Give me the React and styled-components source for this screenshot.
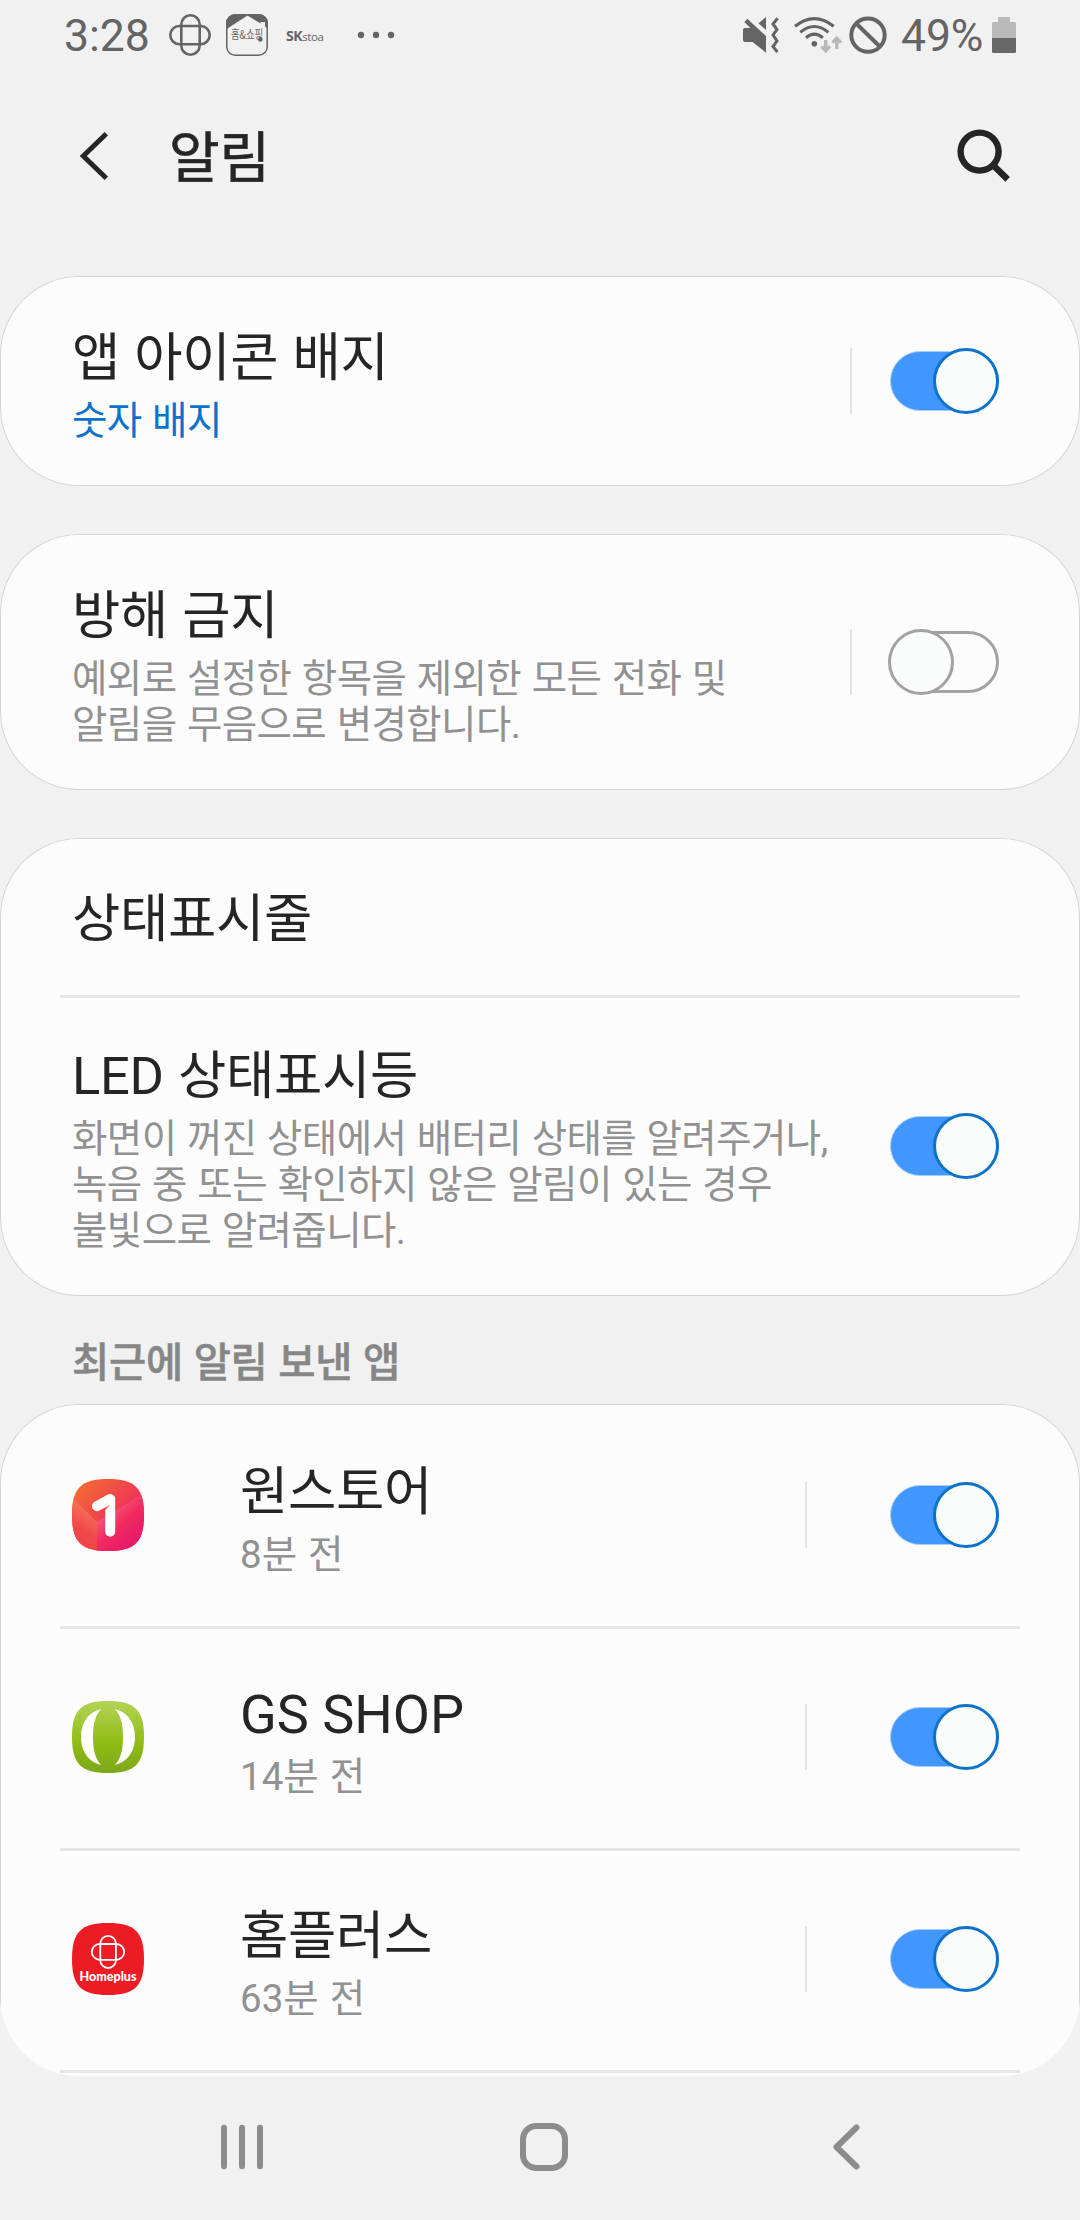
import React from 'react'
import styled, { createGlobalStyle, css } from 'styled-components';

const GlobalStyle = createGlobalStyle`
  * {
    box-sizing: border-box;
  }
  body {
    margin: 0;
    background: #f1f1f1;
    font-family: Roboto, "Noto Sans CJK KR", sans-serif;
    color: #252525;
  }
`;

const apps = [
  { id: 1, name: '원스토어', time: '8분 전', icon: <OneStoreIcon /> },
  { id: 2, name: 'GS SHOP', time: '14분 전', icon: <GsShopIcon />, latin: true },
  { id: 3, name: '홈플러스', time: '63분 전', icon: <HomeplusIcon /> },
];

const App = () => {
  return (
    <Screen>
      <GlobalStyle />
      <StatusBar />
      <Header>
        <BackIcon />
        <PageTitle>알림</PageTitle>
        <SearchIcon />
      </Header>

      <Card>
        <Row $height={210}>
          <Texts>
            <Title>앱 아이콘 배지</Title>
            <Summary $active>숫자 배지</Summary>
          </Texts>
          <Separator />
          <Toggle on />
        </Row>
      </Card>

      <Card>
        <Row $height={256}>
          <Texts>
            <Title>방해 금지</Title>
            <Summary>예외로 설정한 항목을 제외한 모든 전화 및<br />알림을 무음으로 변경합니다.</Summary>
          </Texts>
          <Separator />
          <Toggle />
        </Row>
      </Card>

      <Card>
        <Row $height={157} $top={6}>
          <Texts>
            <Title>상태표시줄</Title>
          </Texts>
        </Row>
        <Row $height={301} $line>
          <Texts>
            <Title>LED 상태표시등</Title>
            <Summary>
              화면이 꺼진 상태에서 배터리 상태를 알려주거나,<br />
              녹음 중 또는 확인하지 않은 알림이 있는 경우<br />
              불빛으로 알려줍니다.
            </Summary>
          </Texts>
          <Toggle on />
        </Row>
      </Card>

      <SectionTitle>최근에 알림 보낸 앱</SectionTitle>
      <ListClip>
        <AppList>
          {apps.map((app, i) => (
            <Row key={app.id} $height={222} $line={i > 0}>
              <IconCell>{app.icon}</IconCell>
              <Texts>
                <Title $latin={app.latin}>{app.name}</Title>
                <Summary $time>{app.time}</Summary>
              </Texts>
              <Separator $wide />
              <Toggle on />
            </Row>
          ))}
          <Row $height={222} $line />
        </AppList>
      </ListClip>

      <NavBar>
        <svg width="48" height="48" viewBox="218 2123 48 48" fill="none" stroke="#8c8c8c" strokeWidth="6" strokeLinecap="round">
          <path d="M224 2127.7V2166.3M242 2127.7V2166.3M260 2127.7V2166.3" />
        </svg>
        <svg width="48" height="48" viewBox="0 0 48 48" fill="none" stroke="#8c8c8c" strokeWidth="6">
          <rect x="3" y="3" width="42" height="42" rx="13" />
        </svg>
        <svg width="48" height="48" viewBox="822 2123 48 48" fill="none" stroke="#8c8c8c" strokeWidth="6" strokeLinecap="round" strokeLinejoin="round">
          <path d="M856.5 2127.5L836.5 2147L856.5 2166.5" />
        </svg>
      </NavBar>
    </Screen>
  );
};

const Toggle = ({ on }) => (
  <Switch>
    <Track $on={on} />
    <Knob $on={on} />
  </Switch>
);

const StatusBar = () => (
  <Bar>
    <Clock>3:28</Clock>
    <svg width="42" height="42" viewBox="169 14 42 42" fill="none" stroke="#646464" strokeWidth="2.6">
      <rect x="181.3" y="15.3" width="18.4" height="39.4" rx="9.2" />
      <rect x="170.3" y="26" width="39.4" height="18.2" rx="9.1" />
    </svg>
    <HomeShopping width="42" height="42" viewBox="0 0 42 42">
      <path d="M0 15V9A9 9 0 0 1 9 0H33A9 9 0 0 1 42 9V15L39 12.5V8H34.5V9.5L21.5 1.5L1.5 14.5Z" fill="#646464" />
      <rect x="0.8" y="0.8" width="40.4" height="40.4" rx="8.5" fill="none" stroke="#646464" strokeWidth="1.5" />
      <text x="5" y="25" textLength="32" lengthAdjust="spacingAndGlyphs">홈&amp;쇼핑</text>
      <circle cx="34.3" cy="25.4" r="2.3" fill="#646464" />
    </HomeShopping>
    <StoaText><b>SK</b>stoa</StoaText>
    <svg width="38" height="8" viewBox="357 31 38 8" fill="#646464">
      <circle cx="361" cy="35" r="3.2" />
      <circle cx="376" cy="35" r="3.2" />
      <circle cx="391" cy="35" r="3.2" />
    </svg>
    <StatusRight>
      <svg width="38" height="40" viewBox="743 15 38 40" fill="#646464">
        <path d="M743 30Q743 28 745 28H750.5L744.3 22L747.3 18.8L766 36V52.7L752.5 42H745Q743 42 743 40Z" />
        <path d="M766 17V30L758.5 23.3Z" />
        <path d="M777.6 18.2L773 24L777 29.5L773 35L777 41L773 46.5L777.3 52" fill="none" stroke="#646464" strokeWidth="3" />
      </svg>
      <svg width="50" height="40" viewBox="793 15 50 40" fill="none" stroke="#646464" strokeWidth="3.1">
        <path d="M795 26.2Q814.3 11 833.7 26.2M800.3 32.4Q814.3 20.6 828.3 32.4M806 37.8Q814.3 30.4 822.8 37.8" />
        <circle cx="814.3" cy="43.7" r="2.8" fill="#646464" stroke="none" />
        <path d="M825.7 40V51M821.5 46.3L825.7 50.8L830 46.3M836.8 49V38M832.5 42.7L836.8 38.2L841 42.7" stroke="#b8b8b8" strokeWidth="3.4" />
      </svg>
      <svg width="38" height="38" viewBox="849 15.7 38 38" fill="none" stroke="#646464" strokeWidth="4">
        <circle cx="868" cy="34.8" r="16.7" />
        <path d="M856.5 23.5L879.5 46" />
      </svg>
      <Percent>49%</Percent>
      <svg width="24" height="36" viewBox="0 0 24 36">
        <path d="M6 1Q6 0 7 0H17Q18 0 18 1V5H22.5Q24 5 24 6.5V21H0V6.5Q0 5 1.5 5H6Z" fill="#bababa" />
        <path d="M0 21H24V34.5Q24 36 22.5 36H1.5Q0 36 0 34.5Z" fill="#676767" />
      </svg>
    </StatusRight>
  </Bar>
);

const BackIcon = () => (
  <svg width="30" height="50" viewBox="79 131 30 50" fill="none" stroke="#252525" strokeWidth="5">
    <path d="M106.3 133.8L83.3 156L106.3 178.2" />
  </svg>
);

const SearchIcon = () => (
  <svg width="54" height="54" viewBox="957 129 54 54" fill="none" stroke="#252525" strokeWidth="6.4">
    <circle cx="979.6" cy="151.6" r="19" />
    <path d="M993.5 165.5L1007.6 179.4" />
  </svg>
);

const squircle = 'M36 0C63 0 72 9 72 36S63 72 36 72 0 63 0 36 9 0 36 0Z';

function OneStoreIcon() {
  return (
    <svg width="72" height="72" viewBox="0 0 72 72">
      <defs>
        <linearGradient id="one-bg" x1="0" y1="0" x2="1" y2="1">
          <stop offset="0.1" stopColor="#f36a32" />
          <stop offset="0.5" stopColor="#f03e50" />
          <stop offset="0.9" stopColor="#e8156f" />
        </linearGradient>
        <linearGradient id="one-right" gradientUnits="userSpaceOnUse" x1="30" y1="30" x2="62" y2="66">
          <stop offset="0" stopColor="#f6667e" />
          <stop offset="0.5" stopColor="#f02a5e" />
          <stop offset="1" stopColor="#e8186c" />
        </linearGradient>
        <linearGradient id="one-left" gradientUnits="userSpaceOnUse" x1="14" y1="30" x2="3" y2="48">
          <stop offset="0" stopColor="#f46e58" />
          <stop offset="1" stopColor="#f14648" />
        </linearGradient>
        <clipPath id="one-clip"><path d={squircle} /></clipPath>
      </defs>
      <g clipPath="url(#one-clip)">
        <rect width="72" height="72" fill="url(#one-bg)" />
        <path d="M0 18L25 43V72H0Z" fill="url(#one-left)" />
        <path d="M25 43L72 14V72H25Z" fill="url(#one-right)" />
      </g>
      <path d="M25 27.2L38.2 20V52.8" fill="none" stroke="#fff" strokeWidth="10" strokeLinecap="round" strokeLinejoin="round" />
      <path d="M33 28.7L38 25.8L33.2 31.2Z" fill="#f04a50" />
    </svg>
  );
}

function GsShopIcon() {
  return (
    <svg width="72" height="72" viewBox="0 0 72 72">
      <defs>
        <linearGradient id="gs-bg" x1="0" y1="0" x2="0" y2="1">
          <stop offset="0" stopColor="#b4d356" />
          <stop offset="0.6" stopColor="#8fbb14" />
          <stop offset="1" stopColor="#7ca71c" />
        </linearGradient>
      </defs>
      <path d={squircle} fill="url(#gs-bg)" />
      <path d="M29 8.3C17 10.5 9 21.5 9 36S17 61.5 29 63.7C23.5 58.5 21 49 21 36S23.5 13.5 29 8.3Z" fill="#fff" />
      <path d="M43 8.3C55 10.5 63 21.5 63 36S55 61.5 43 63.7C48.5 58.5 51 49 51 36S48.5 13.5 43 8.3Z" fill="#fff" />
    </svg>
  );
}

function HomeplusIcon() {
  return (
    <HomeplusSvg width="72" height="72" viewBox="0 0 72 72">
      <path d={squircle} fill="#ed1c24" />
      <g fill="none" stroke="#fff" strokeWidth="1.8">
        <rect x="28.3" y="12.8" width="15.6" height="32.2" rx="7.8" />
        <rect x="19.8" y="21" width="32.4" height="15.8" rx="7.9" />
      </g>
      <text x="36" y="57.7" textAnchor="middle" textLength="57" lengthAdjust="spacingAndGlyphs">Homeplus</text>
    </HomeplusSvg>
  );
}

const Screen = styled.div`
  width: 1080px;
  height: 2220px;
  overflow: hidden;
  background: #f1f1f1;
  svg {
    display: block;
    flex-shrink: 0;
  }
`;

const Bar = styled.div`
  display: flex;
  align-items: center;
  height: 70px;
  padding: 0 64px;
  color: #646464;
`;

const Clock = styled.span`
  width: 105px;
  font-size: 44.5px;
  line-height: 70px;
  padding-top: 2px;
`;

const HomeShopping = styled.svg`
  margin-left: 15px;
  overflow: visible;
  text {
    font-family: "Noto Sans CJK KR", sans-serif;
    font-size: 12px;
    font-weight: 400;
    fill: #646464;
  }
`;

const StoaText = styled.span`
  width: 71px;
  margin: 2px 0 0 18px;
  font-family: "Open Sans", sans-serif;
  font-size: 11.5px;
  line-height: 20px;
  letter-spacing: -0.4px;
  b {
    font-size: 14px;
    letter-spacing: -0.4px;
  }
`;

const StatusRight = styled.div`
  display: flex;
  align-items: center;
  margin-left: auto;
  > svg:nth-child(2) {
    margin-left: 12px;
  }
  > svg:nth-child(3) {
    margin-left: 6px;
  }
`;

const Percent = styled.span`
  width: 91px;
  margin-left: 14px;
  font-size: 44.5px;
  line-height: 70px;
  letter-spacing: -0.1px;
  padding-top: 2px;
`;

const Header = styled.header`
  display: flex;
  align-items: center;
  height: 172px;
  padding: 0 69px 0 79px;
  margin-bottom: 34px;
  > svg:last-child {
    margin-left: auto;
  }
`;

const PageTitle = styled.h1`
  margin: 4px 0 0 60px;
  font-size: 55px;
  font-weight: 400;
  line-height: 80px;
  -webkit-text-stroke: 0.6px #252525;
`;

const surface = css`
  background: #fcfcfc;
  box-shadow: inset 0 0 0 1px #d5d5d5;
`;

const Card = styled.section`
  ${surface}
  border-radius: 79px;
  & + & {
    margin-top: 48px;
  }
`;

const ListClip = styled.div`
  height: 672px;
  overflow: hidden;
  border-radius: 0 0 79px 79px;
`;

const AppList = styled.section`
  ${surface}
  border-radius: 79px 79px 0 0;
`;

const Row = styled.div`
  display: flex;
  align-items: center;
  height: ${({ $height }) => $height}px;
  padding: ${({ $top }) => $top || 0}px 81px 0 72px;
  ${({ $line }) => $line && css`
    background: linear-gradient(#e6e6e6, #e6e6e6) 60px 0 / 960px 3px no-repeat;
  `}
`;

const IconCell = styled.div`
  width: 168px;
`;

const Texts = styled.div`
  flex: 1;
  white-space: nowrap;
`;

const Title = styled.div`
  font-size: 52.5px;
  line-height: 79px;
  letter-spacing: -0.3px;
  word-spacing: 1.5px;
  ${({ $latin }) => $latin && css`
    font-size: 54px;
    letter-spacing: 0;
    word-spacing: 0;
  `}
`;

const Summary = styled.div`
  font-size: 38.5px;
  line-height: 46px;
  letter-spacing: ${({ $time }) => ($time ? '0' : '-0.6px')};
  word-spacing: 1.5px;
  color: ${({ $active }) => ($active ? '#0b72cb' : '#919191')};
`;

const Separator = styled.div`
  width: 2px;
  height: 66px;
  margin-right: ${({ $wide }) => ($wide ? 81 : 36)}px;
  background: #e4e4e4;
`;

const Switch = styled.div`
  position: relative;
  display: flex;
  align-items: center;
  justify-content: flex-end;
  width: 111px;
  height: 66px;
`;

const Track = styled.div`
  width: 109px;
  height: 60px;
  border-radius: 30px;
  background: #4296ff;
  border: 1px solid #a3ccff;
  ${({ $on }) => !$on && css`
    height: 62px;
    border-radius: 31px;
    background: #fcfcfc;
    border: 3px solid #a2a2a2;
  `}
`;

const Knob = styled.div`
  position: absolute;
  top: 0;
  ${({ $on }) => ($on ? 'right: 0;' : 'left: 0;')}
  width: 66px;
  height: 66px;
  border-radius: 50%;
  background: #fafbfb;
  border: 3px solid ${({ $on }) => ($on ? '#0d73ca' : '#a2a2a2')};
`;

const SectionTitle = styled.h2`
  height: 108px;
  margin: 0;
  padding: 27px 0 0 72px;
  font-size: 40.5px;
  font-weight: 500;
  line-height: 81px;
  letter-spacing: -0.3px;
  word-spacing: 1px;
  color: #868686;
  -webkit-text-stroke: 0.5px #868686;
`;

const HomeplusSvg = styled.svg`
  text {
    font-family: Lato, sans-serif;
    font-size: 13px;
    font-weight: 900;
    fill: #fff;
  }
`;

const NavBar = styled.nav`
  display: grid;
  grid-template-columns: repeat(3, 302px);
  justify-items: center;
  align-items: center;
  height: 142px;
  padding-left: 91px;
`;

export default App
